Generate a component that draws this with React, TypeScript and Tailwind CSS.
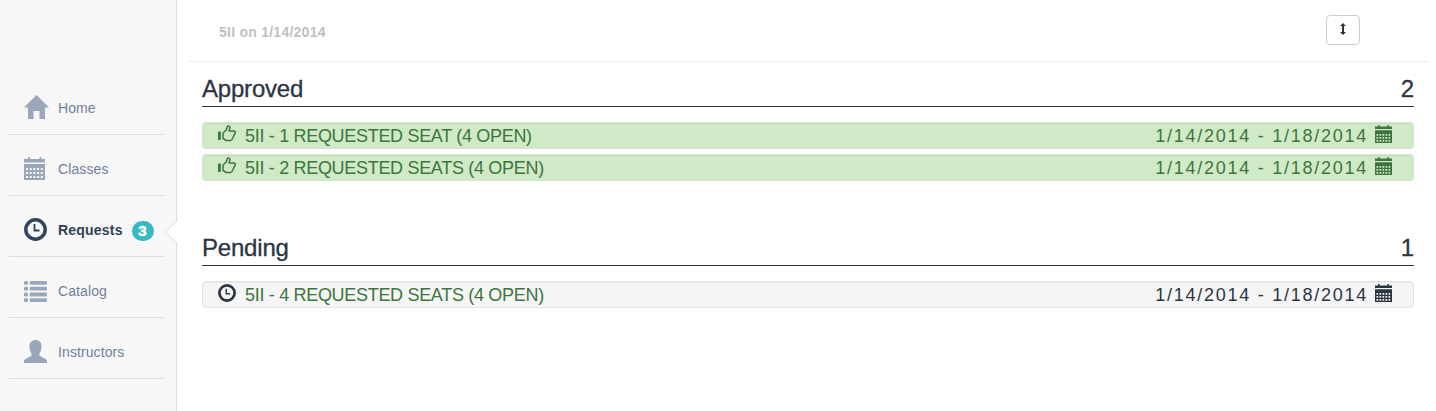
import React from "react";

type IconProps = { className?: string };

function HomeIcon({ className }: IconProps) {
  return (
    <svg viewBox="0 0 25 24" className={className} fill="currentColor">
      <path d="M12.500 0 25 12.500h-4V24h-5.500v-8h-6v8H4V12.500H0z" />
    </svg>
  );
}

const gridCols = [0, 1, 2, 3, 4];
const gridRows = [0, 1, 2];

function CalendarLargeIcon({ className }: IconProps) {
  return (
    <svg viewBox="0 0 21 23" className={className} fill="currentColor">
      <path d="M0 2h4V0.300h2V2h9.500V0.300h2V2H21v3.600H0z" />
      <path
        fillRule="evenodd"
        d={
          "M0 7h21V23H0z" +
          gridRows
            .map((r) => gridCols.map((c) => `M${2 + c * 3.7} ${11 + r * 4}v2h2v-2z`).join(""))
            .join("")
        }
      />
    </svg>
  );
}

function CalendarSmallIcon({ className }: IconProps) {
  return (
    <svg viewBox="0 0 17 18" className={className} fill="currentColor">
      <path d="M0 1.500h3V0h1.500v1.500h8V0H14v1.500h3V4H0z" />
      <path
        fillRule="evenodd"
        d={
          "M0 5.300h17V18H0z" +
          gridRows
            .map((r) => gridCols.map((c) => `M${1.5 + c * 3} ${9 + r * 3}v1.700h1.700v-1.700z`).join(""))
            .join("")
        }
      />
    </svg>
  );
}

function ClockIcon({ className }: IconProps) {
  return (
    <svg viewBox="0 0 23 23" className={className} fill="none" stroke="currentColor">
      <circle cx="11.500" cy="11.500" r="9.700" strokeWidth="3.500" />
      <path d="M10.500 6v6.500h5" strokeWidth="1.800" />
    </svg>
  );
}

function ListIcon({ className }: IconProps) {
  return (
    <svg viewBox="0 0 23 21" className={className} fill="currentColor">
      {[0, 5.8, 11.6, 17.2].map((y) => (
        <g key={y}>
          <rect x="0" y={y} width="4" height="3.800" rx="1.200" />
          <rect x="5.700" y={y} width="17.300" height="3.800" rx="1.200" />
        </g>
      ))}
    </svg>
  );
}

function UserIcon({ className }: IconProps) {
  return (
    <svg viewBox="0 0 23 23" className={className} fill="currentColor">
      <path d="M11.500 0C15 0 17.500 2.200 17.500 6c0 3.800-.8 6-2 7.500v2.300L21.500 19c1 .6 1.500 1.200 1.500 2v2H0v-2c0-.8.500-1.400 1.500-2l6-3.200v-2.300C6.300 12 5.500 9.800 5.500 6 5.500 2.200 8 0 11.500 0z" />
    </svg>
  );
}

function ThumbIcon({ className }: IconProps) {
  return (
    <svg viewBox="0 0 18 17" className={className} fill="none">
      <rect x="0" y="6.500" width="2.800" height="8.500" fill="currentColor" />
      <path
        d="M5 8 8.200 5 9.300 1.800c.3-1.100 2.200-1 2.500.3.300 1.300-.7 2.600-.8 3.900h5.200c1.200.2 1.500 1.500.7 2.300l-2.700 6c-.4.900-1 1.200-2 1.200H8.400L5 13.500z"
        stroke="currentColor"
        strokeWidth="1.500"
        strokeLinejoin="round"
      />
    </svg>
  );
}

function ResizeIcon({ className }: IconProps) {
  return (
    <svg viewBox="0 0 6 12" className={className} fill="currentColor">
      <path d="M3 0 6 3H4v6h2L3 12 0 9h2V3H0z" />
    </svg>
  );
}

type NavItemProps = {
  label: string;
  icon: React.ReactNode;
  active?: boolean;
  badge?: number;
};

function NavItem({ label, icon, active, badge }: NavItemProps) {
  return (
    <li
      className={`relative ml-[9px] flex h-[61px] w-[155px] items-center border-b border-[#d6dfe9] pt-[7px] pl-[15px] text-[14px] ${
        active ? "font-bold tracking-[0.2px] text-[#313f56]" : "tracking-[0.1px] text-[#6f809e]"
      }`}
    >
      <span className={`flex w-[34px] shrink-0 ${active ? "text-[#33435c]" : "text-[#9aa7b9]"}`}>{icon}</span>
      <span className="pt-[2px]">{label}</span>
      {badge !== undefined && (
        <span className="mt-[3px] ml-[9px] flex h-5 w-[22px] shrink-0 items-center justify-center rounded-full bg-[#37b9c1] pt-px text-[15px] font-bold text-white [-webkit-text-stroke:0.600px_white]">
          {badge}
        </span>
      )}
      {active && (
        <svg viewBox="0 0 13 24" className="absolute top-[24px] left-[156px] h-6 w-[13px]">
          <path d="M12 1 1 12l11 11h1V1z" fill="#fff" />
          <path d="M12 0.500 1 12l11 11.500" fill="none" stroke="#d6dfe9" />
        </svg>
      )}
    </li>
  );
}

type RequestRowProps = { title: string; approved?: boolean };

function RequestRow({ title, approved }: RequestRowProps) {
  return (
    <div
      className={`flex h-[27px] items-center justify-between rounded-[4px] border pr-[21px] pl-[15px] text-[18px] leading-[25px] shadow-[inset_0_1px_1px_rgba(0,0,0,0.05)] ${
        approved
          ? "border-[#d6e3d0] bg-[#d0e9c6] text-[#3c763d]"
          : "border-[#e3e3e3] bg-[#f5f5f5] text-[#2b3542]"
      }`}
    >
      <div className="flex items-center">
        <span className="mb-[4px] flex w-[27px]">
          {approved ? <ThumbIcon className="h-[17px] w-[18px]" /> : <ClockIcon className="h-[18px] w-[18px]" />}
        </span>
        <span className="pt-px tracking-[-0.31px] text-[#3c763d]">{title}</span>
      </div>
      <div className="flex items-center">
        <span className="pt-px tracking-[1.74px]">1/14/2014 - 1/18/2014</span>
        <CalendarSmallIcon className="mb-[4px] ml-[7px] h-[18px] w-[17px]" />
      </div>
    </div>
  );
}

function SectionHeading({ title, count }: { title: string; count: number }) {
  return (
    <h2 className="flex h-[35px] items-end justify-between border-b border-[#2b3542] pb-[3px] text-[24px] leading-[28px] text-[#2b3542] [-webkit-text-stroke:0.300px_#2b3542]">
      <span className="tracking-[-0.2px]">{title}</span>
      <span>{count}</span>
    </h2>
  );
}

export default function App() {
  return (
    <div className="flex h-[411px] w-[1436px] overflow-hidden bg-white font-['Liberation_Sans',Arial,sans-serif]">
      <aside className="w-[177px] shrink-0 border-r border-[#d6dfe9] bg-[#f7f7f7] pt-[74px]">
        <ul>
          <NavItem label="Home" icon={<HomeIcon className="mb-[2px] h-6 w-[25px]" />} />
          <NavItem label="Classes" icon={<CalendarLargeIcon className="h-[23px] w-[21px]" />} />
          <NavItem label="Requests" active badge={3} icon={<ClockIcon className="h-[23px] w-[23px]" />} />
          <NavItem label="Catalog" icon={<ListIcon className="mt-[2px] h-[21px] w-[23px]" />} />
          <NavItem label="Instructors" icon={<UserIcon className="h-[23px] w-[23px]" />} />
        </ul>
      </aside>
      <main className="w-[1259px] pr-[7px] pl-[11px]">
        <header className="flex h-[62px] items-center justify-between border-b border-[#eeeeee] pr-[69px] pl-[31px]">
          <h1 className="pt-[4px] text-[14px] font-bold tracking-[0.25px] text-[#bfbfbf]">5II on 1/14/2014</h1>
          <button
            aria-label="Resize"
            className="mb-[1px] flex h-[30px] w-[34px] items-center justify-center rounded-[4px] border border-[#cccccc] bg-white pb-[2px] text-[#333333]"
          >
            <ResizeIcon className="h-3 w-[6px]" />
          </button>
        </header>
        <div className="pr-[15px] pl-[14px]">
          <section className="pt-[10px]">
            <SectionHeading title="Approved" count={2} />
            <div className="mt-[15px] flex flex-col gap-[5px]">
              <RequestRow approved title="5II - 1 REQUESTED SEAT (4 OPEN)" />
              <RequestRow approved title="5II - 2 REQUESTED SEATS (4 OPEN)" />
            </div>
          </section>
          <section className="mt-[50px]">
            <SectionHeading title="Pending" count={1} />
            <div className="mt-[15px]">
              <RequestRow title="5II - 4 REQUESTED SEATS (4 OPEN)" />
            </div>
          </section>
        </div>
      </main>
    </div>
  );
}
